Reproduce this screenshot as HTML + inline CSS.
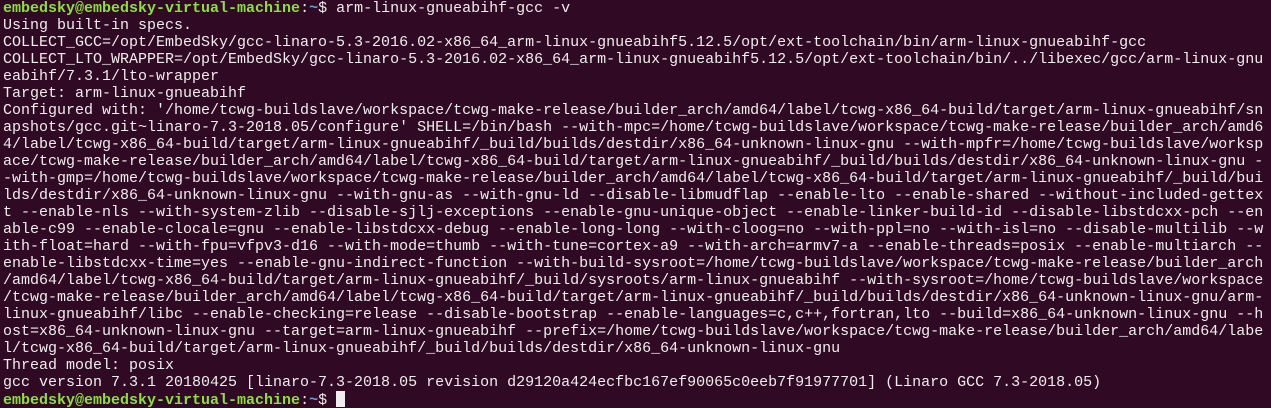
<!DOCTYPE html>
<html><head><meta charset="utf-8"><style>
html,body{margin:0;padding:0;background:#300a24;width:1271px;height:408px;overflow:hidden}
pre{margin:0;padding:0 0 0 3px;font-family:"Liberation Mono",monospace;font-size:15px;line-height:17px;color:#eeeeec;white-space:pre}
.g{color:#8ae234;font-weight:bold}.b{color:#729fcf;font-weight:bold}
.c{display:inline-block;width:9px;height:16px;background:#eeeeec;vertical-align:-3px}
</style></head><body><pre><span class="g">embedsky@embedsky-virtual-machine</span>:<span class="b">~</span>$ arm-linux-gnueabihf-gcc -v
Using built-in specs.
COLLECT_GCC=/opt/EmbedSky/gcc-linaro-5.3-2016.02-x86_64_arm-linux-gnueabihf5.12.5/opt/ext-toolchain/bin/arm-linux-gnueabihf-gcc
COLLECT_LTO_WRAPPER=/opt/EmbedSky/gcc-linaro-5.3-2016.02-x86_64_arm-linux-gnueabihf5.12.5/opt/ext-toolchain/bin/../libexec/gcc/arm-linux-gnu
eabihf/7.3.1/lto-wrapper
Target: arm-linux-gnueabihf
Configured with: '/home/tcwg-buildslave/workspace/tcwg-make-release/builder_arch/amd64/label/tcwg-x86_64-build/target/arm-linux-gnueabihf/sn
apshots/gcc.git~linaro-7.3-2018.05/configure' SHELL=/bin/bash --with-mpc=/home/tcwg-buildslave/workspace/tcwg-make-release/builder_arch/amd6
4/label/tcwg-x86_64-build/target/arm-linux-gnueabihf/_build/builds/destdir/x86_64-unknown-linux-gnu --with-mpfr=/home/tcwg-buildslave/worksp
ace/tcwg-make-release/builder_arch/amd64/label/tcwg-x86_64-build/target/arm-linux-gnueabihf/_build/builds/destdir/x86_64-unknown-linux-gnu -
-with-gmp=/home/tcwg-buildslave/workspace/tcwg-make-release/builder_arch/amd64/label/tcwg-x86_64-build/target/arm-linux-gnueabihf/_build/bui
lds/destdir/x86_64-unknown-linux-gnu --with-gnu-as --with-gnu-ld --disable-libmudflap --enable-lto --enable-shared --without-included-gettex
t --enable-nls --with-system-zlib --disable-sjlj-exceptions --enable-gnu-unique-object --enable-linker-build-id --disable-libstdcxx-pch --en
able-c99 --enable-clocale=gnu --enable-libstdcxx-debug --enable-long-long --with-cloog=no --with-ppl=no --with-isl=no --disable-multilib --w
ith-float=hard --with-fpu=vfpv3-d16 --with-mode=thumb --with-tune=cortex-a9 --with-arch=armv7-a --enable-threads=posix --enable-multiarch --
enable-libstdcxx-time=yes --enable-gnu-indirect-function --with-build-sysroot=/home/tcwg-buildslave/workspace/tcwg-make-release/builder_arch
/amd64/label/tcwg-x86_64-build/target/arm-linux-gnueabihf/_build/sysroots/arm-linux-gnueabihf --with-sysroot=/home/tcwg-buildslave/workspace
/tcwg-make-release/builder_arch/amd64/label/tcwg-x86_64-build/target/arm-linux-gnueabihf/_build/builds/destdir/x86_64-unknown-linux-gnu/arm-
linux-gnueabihf/libc --enable-checking=release --disable-bootstrap --enable-languages=c,c++,fortran,lto --build=x86_64-unknown-linux-gnu --h
ost=x86_64-unknown-linux-gnu --target=arm-linux-gnueabihf --prefix=/home/tcwg-buildslave/workspace/tcwg-make-release/builder_arch/amd64/labe
l/tcwg-x86_64-build/target/arm-linux-gnueabihf/_build/builds/destdir/x86_64-unknown-linux-gnu
Thread model: posix
gcc version 7.3.1 20180425 [linaro-7.3-2018.05 revision d29120a424ecfbc167ef90065c0eeb7f91977701] (Linaro GCC 7.3-2018.05)
<span class="g">embedsky@embedsky-virtual-machine</span>:<span class="b">~</span>$ <span class="c"></span></pre></body></html>
